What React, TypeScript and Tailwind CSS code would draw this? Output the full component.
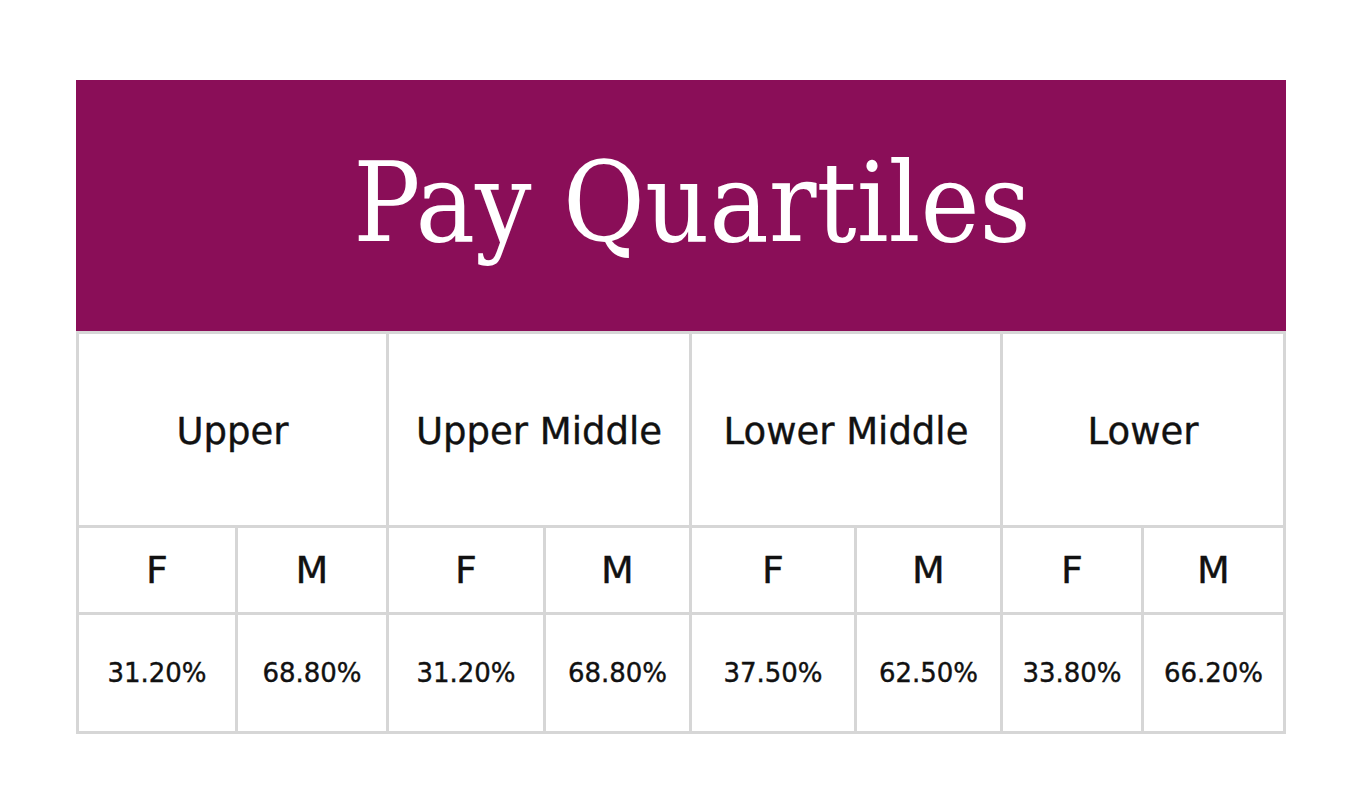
import React from "react";

const groups = [
  { name: "Upper", f: "31.20%", m: "68.80%" },
  { name: "Upper Middle", f: "31.20%", m: "68.80%" },
  { name: "Lower Middle", f: "37.50%", m: "62.50%" },
  { name: "Lower", f: "33.80%", m: "66.20%" },
];

export default function App() {
  return (
    <div className="min-h-[800px] w-[1350px] bg-white pt-[80px] pl-[76px]">
      <div className="w-[1210px]">
        <div className="flex h-[251px] items-center justify-center bg-[#8a0e58] pb-[6px] pl-[22px]">
          <h1
            className="text-[111px] leading-none text-white [font-stretch:condensed]"
            style={{ fontFamily: '"DejaVu Serif Condensed", "DejaVu Serif", serif' }}
          >
            Pay Quartiles
          </h1>
        </div>
        <div
          className="grid grid-cols-[156px_148px_154px_143px_162px_143px_138px_139px] grid-rows-[191px_84px_116px] gap-[3px] bg-[#d6d6d6] p-[3px] text-[#111] [-webkit-text-stroke:0.4px_#111]"
          style={{ fontFamily: '"DejaVu Sans", sans-serif' }}
        >
          {groups.map((g) => (
            <div key={g.name} className="col-span-2 flex items-center justify-center bg-white pt-[4px] text-[37px]">
              {g.name}
            </div>
          ))}
          {groups.map((g) => (
            <React.Fragment key={g.name + "fm"}>
              <div className="flex items-center justify-center bg-white text-[38px]">F</div>
              <div className="flex items-center justify-center bg-white text-[38px]">M</div>
            </React.Fragment>
          ))}
          {groups.map((g) => (
            <React.Fragment key={g.name + "v"}>
              <div className="flex items-center justify-center bg-white text-[26px]">{g.f}</div>
              <div className="flex items-center justify-center bg-white text-[26px]">{g.m}</div>
            </React.Fragment>
          ))}
        </div>
      </div>
    </div>
  );
}
